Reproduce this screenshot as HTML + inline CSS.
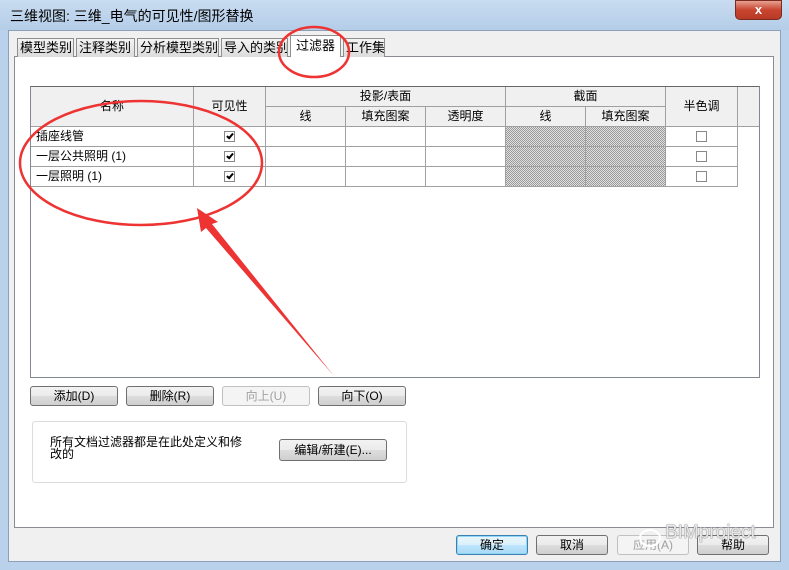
<!DOCTYPE html>
<html><head><meta charset="utf-8"><style>
*{box-sizing:border-box;margin:0;padding:0}
body{width:789px;height:570px;overflow:hidden;background:#b9d1ea;font-family:"Liberation Sans","Noto Sans CJK SC",sans-serif;font-size:12px;color:#000;position:relative}
.a{position:absolute}
.title{left:0;top:0;width:789px;height:30px;background:linear-gradient(#c9dcf0,#b4cde8)}
.client{left:8px;top:30px;width:773px;height:532px;background:#f0f0f0;border:1px solid #8ca0b8}
.tab{top:38px;height:19px;background:linear-gradient(#f4f4f4,#dcdcdc);border:1px solid #8e8f8f;border-bottom:none;font-size:13px;line-height:17px;padding-left:2px;white-space:nowrap;overflow:hidden}
.panel{left:14px;top:56px;width:760px;height:472px;background:#fff;border:1px solid #898c95}
.btn{height:20px;border:1px solid #707070;border-radius:3px;background:linear-gradient(#f2f2f2 0,#ebebeb 50%,#dddddd 51%,#cfcfcf 100%);text-align:center;line-height:18px;font-size:12px;white-space:nowrap}
.hd{background:#f0f0f0;border-right:1px solid #a0a0a0;border-bottom:1px solid #a0a0a0;text-align:center;line-height:19px;font-size:12px}
.cell{border-right:1px solid #a0a0a0;border-bottom:1px solid #a0a0a0;height:20px;line-height:19px;position:relative}
.hatch{background-color:#c4c4c4;background-image:repeating-conic-gradient(#9a9a9a 0 25%,#e0e0e0 0 50%);background-size:2px 2px}
.cb{position:absolute;width:11px;height:11px;border:1px solid #888;background:#fff}
.ck{position:absolute;left:3px;top:0px;width:4px;height:7px;border-right:2px solid #000;border-bottom:2px solid #000;transform:rotate(40deg)}
</style></head><body>
<div class="a title"></div>
<div class="a" style="left:10px;top:6px;font-size:14px">三维视图: 三维_电气的可见性/图形替换</div>
<div class="a" style="left:735px;top:0;width:47px;height:20px;border-radius:0 0 5px 5px;background:linear-gradient(#e8a090,#c8452f 50%,#b83a26);border:1px solid #7a2a1e;color:#fff;text-align:center;font-weight:bold;font-size:13px;line-height:18px">x</div>
<div class="a client"></div>
<div class="a panel"></div>
<div class="a tab" style="left:17px;width:57px">模型类别</div>
<div class="a tab" style="left:76px;width:59px">注释类别</div>
<div class="a tab" style="left:137px;width:82px">分析模型类别</div>
<div class="a tab" style="left:221px;width:67px">导入的类别</div>
<div class="a tab" style="left:290px;top:35px;height:22px;width:51px;background:#fff;line-height:20px;padding-left:5px">过滤器</div>
<div class="a tab" style="left:343px;width:42px">工作集</div>

<div class="a" style="left:30px;top:86px;width:730px;height:292px;border:1px solid #828790;border-top:1px solid #666;background:#fff"></div>
<div class="a hd" style="left:31px;top:87px;width:163px;height:40px;line-height:38px">名称</div>
<div class="a hd" style="left:194px;top:87px;width:72px;height:40px;line-height:38px">可见性</div>
<div class="a hd" style="left:266px;top:87px;width:240px;height:20px">投影/表面</div>
<div class="a hd" style="left:266px;top:107px;width:80px;height:20px">线</div>
<div class="a hd" style="left:346px;top:107px;width:80px;height:20px">填充图案</div>
<div class="a hd" style="left:426px;top:107px;width:80px;height:20px">透明度</div>
<div class="a hd" style="left:506px;top:87px;width:160px;height:20px">截面</div>
<div class="a hd" style="left:506px;top:107px;width:80px;height:20px">线</div>
<div class="a hd" style="left:586px;top:107px;width:80px;height:20px">填充图案</div>
<div class="a hd" style="left:666px;top:87px;width:72px;height:40px;line-height:38px">半色调</div>
<div class="a hd" style="left:738px;top:87px;width:21px;height:40px;border-right:none"></div>

<div class="a" style="left:31px;top:127px">
<div style="display:flex">
<div class="cell" style="width:163px;padding-left:5px">插座线管</div><div class="cell" style="width:72px"><div class="cb" style="left:30px;top:4px"><div class="ck"></div></div></div><div class="cell" style="width:80px"></div><div class="cell" style="width:80px"></div><div class="cell" style="width:80px"></div><div class="cell hatch" style="width:80px"></div><div class="cell hatch" style="width:80px"></div><div class="cell" style="width:72px"><div class="cb" style="left:30px;top:4px"></div></div></div>
<div style="display:flex">
<div class="cell" style="width:163px;padding-left:5px">一层公共照明 (1)</div><div class="cell" style="width:72px"><div class="cb" style="left:30px;top:4px"><div class="ck"></div></div></div><div class="cell" style="width:80px"></div><div class="cell" style="width:80px"></div><div class="cell" style="width:80px"></div><div class="cell hatch" style="width:80px"></div><div class="cell hatch" style="width:80px"></div><div class="cell" style="width:72px"><div class="cb" style="left:30px;top:4px"></div></div></div>
<div style="display:flex">
<div class="cell" style="width:163px;padding-left:5px">一层照明 (1)</div><div class="cell" style="width:72px"><div class="cb" style="left:30px;top:4px"><div class="ck"></div></div></div><div class="cell" style="width:80px"></div><div class="cell" style="width:80px"></div><div class="cell" style="width:80px"></div><div class="cell hatch" style="width:80px"></div><div class="cell hatch" style="width:80px"></div><div class="cell" style="width:72px"><div class="cb" style="left:30px;top:4px"></div></div></div>
</div>

<div class="a btn" style="left:30px;top:386px;width:88px">添加(D)</div>
<div class="a btn" style="left:126px;top:386px;width:88px">删除(R)</div>
<div class="a btn" style="left:222px;top:386px;width:88px;color:#a0a0a0;border-color:#c0c0c0;background:#f4f4f4">向上(U)</div>
<div class="a btn" style="left:318px;top:386px;width:88px">向下(O)</div>

<div class="a" style="left:32px;top:421px;width:375px;height:62px;border:1px solid #dcdcdc;border-radius:3px"></div>
<div class="a" style="left:50px;top:436px;line-height:12px;font-size:12px">所有文档过滤器都是在此处定义和修<br>改的</div>
<div class="a btn" style="left:279px;top:439px;width:108px;height:22px;line-height:20px">编辑/新建(E)...</div>

<div class="a btn" style="left:456px;top:535px;width:72px;border-color:#3c7fb1;box-shadow:inset 0 0 0 1px #8fd6f7;background:linear-gradient(#eaf6fd,#d9f0fc 50%,#bee6fd 51%,#a7d9f5)">确定</div>
<div class="a btn" style="left:536px;top:535px;width:72px">取消</div>
<div class="a btn" style="left:617px;top:535px;width:72px;color:#a0a0a0;border-color:#c0c0c0;background:#f4f4f4">应用(A)</div>
<div class="a btn" style="left:697px;top:535px;width:72px">帮助</div>
<div class="a" style="left:665px;top:522px;font-size:19px;color:rgba(255,255,255,0.85);text-shadow:0 0 1px #666,0 0 1px #666">BIMproject</div>

<svg class="a" style="left:0;top:0" width="789" height="570">
<ellipse cx="314" cy="52" rx="35" ry="25" fill="none" stroke="#e33" stroke-width="2.5"/>
<ellipse cx="141" cy="163" rx="121" ry="62" fill="none" stroke="#e33" stroke-width="2.5"/>
<polygon points="197,208 218,222 212,224 334,376 206,228 201,232" fill="#e33"/>
<ellipse cx="650" cy="538" rx="10" ry="8" fill="none" stroke="#fff" stroke-width="2"/>
</svg>
</body></html>
